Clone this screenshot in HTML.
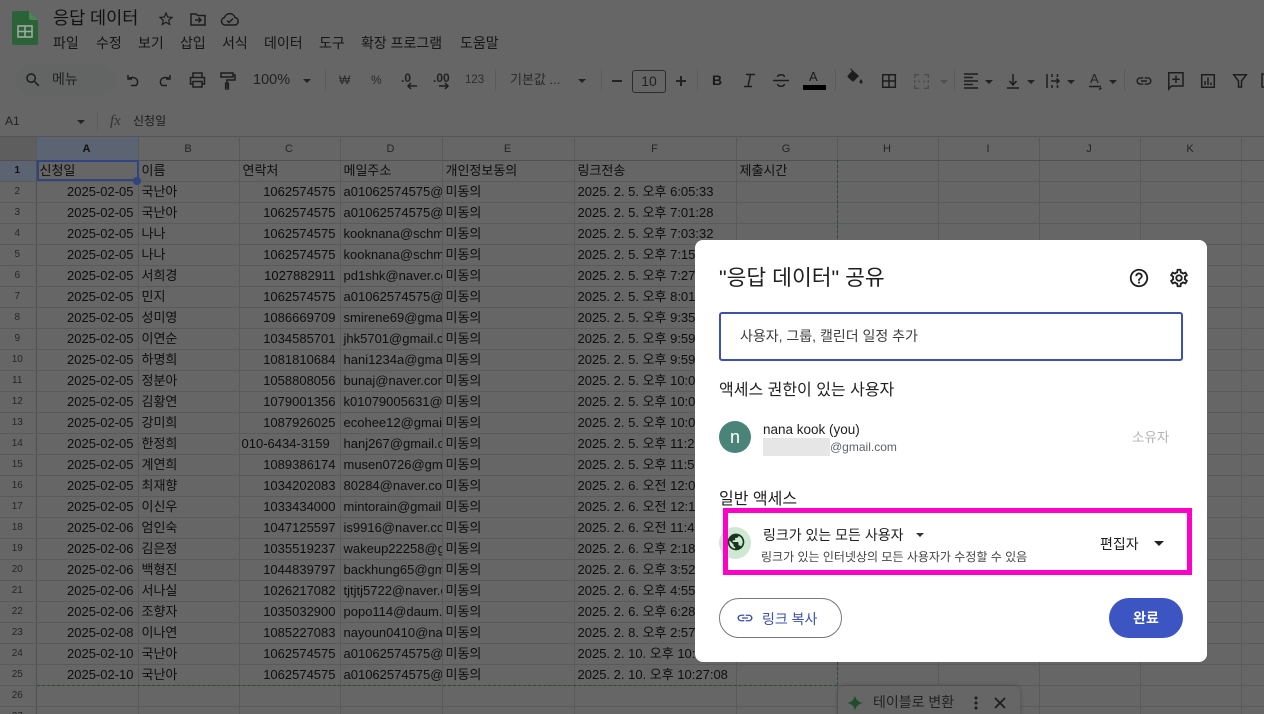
<!DOCTYPE html>
<html lang="ko"><head><meta charset="utf-8"><title>응답 데이터</title>
<style>
html,body{margin:0;padding:0;width:1264px;height:714px;overflow:hidden;background:#666}
body{position:relative;font-family:"Liberation Sans","Noto Sans CJK KR",sans-serif;color:#111}
#bg{position:absolute;left:0;top:0;width:1264px;height:714px;overflow:hidden;filter:blur(.35px)}
.a{position:absolute;white-space:nowrap}
.m{position:absolute;top:34px;font-size:14px;line-height:18px;color:#161616;white-space:nowrap}
svg{position:absolute;overflow:visible}
.t{fill:none;stroke:#1d1d1d;stroke-width:1.5}
.f{fill:#1d1d1d}
.c{position:absolute;width:0;height:0;border-left:4px solid transparent;border-right:4px solid transparent;border-top:4px solid #222}
.s{position:absolute;width:1px;height:22px;top:69px;background:#5a5a5a}
table{position:absolute;left:-1px;top:136px;border-collapse:collapse;table-layout:fixed;width:1342px}
td,th{padding:0 4px 0 3px;height:20px;line-height:20px;font-size:13px;font-weight:400;border-right:1px solid #5a5a5a;border-bottom:1px solid #5a5a5a;overflow:hidden;white-space:nowrap;color:#0e0e0e;box-sizing:border-box}
tr{height:21px}
tr.h{height:24px}
tr.h th{height:24px;font-size:11px;color:#242424;text-align:center;border-top:1px solid #555;border-bottom:1px solid #505050}
td.n{font-size:10px;text-align:center;color:#262626;padding:0;border-right:1px solid #505050}
td.r{text-align:right}
</style></head><body>
<div id="bg">
<!-- logo -->
<svg style="left:12px;top:11px" width="26" height="34" viewBox="0 0 26 34"><path d="M2 0H17L26 9V32a2 2 0 0 1-2 2H2a2 2 0 0 1-2-2V2A2 2 0 0 1 2 0Z" fill="#2b6238"/><path d="M17 0L26 9H19a2 2 0 0 1-2-2Z" fill="#4c8458"/><rect x="6" y="15" width="14" height="11" fill="none" stroke="#a0a8a2" stroke-width="1.6"/><path d="M6 20.500H20M13 15V26" stroke="#a0a8a2" stroke-width="1.6"/></svg>

<div class="a" style="left:53px;top:5px;font-size:17.500px;line-height:26px;color:#111">응답 데이터</div>
<svg style="left:157px;top:10px" width="18" height="18" viewBox="0 0 24 24"><path class="f" d="M22 9.240l-7.190-.62L12 2 9.190 8.630 2 9.240l5.460 4.730L5.820 21 12 17.270 18.180 21l-1.630-7.030L22 9.240zM12 15.400l-3.760 2.270 1-4.280-3.320-2.880 4.380-.38L12 6.100l1.710 4.040 4.380.38-3.320 2.880 1 4.280L12 15.400z"/></svg>
<svg style="left:189px;top:10px" width="18" height="18" viewBox="0 0 18 18"><path class="t" d="M2 15V4H7L8.500 5.500H16V15Z"/><path class="t" d="M6 10H12M9.500 7.500L12 10L9.500 12.500" stroke-width="1.3"/></svg>
<svg style="left:220px;top:10px" width="20" height="18" viewBox="0 0 20 18"><path class="t" d="M5 15A3.800 3.800 0 0 1 4.500 7.500A5.500 5.500 0 0 1 15 7.500A3.800 3.800 0 0 1 15 15Z"/><path class="t" d="M7 10.500L9 12.500L13 8.500" stroke-width="1.300"/></svg>

<div class="m" style="left:53px">파일</div>
<div class="m" style="left:96px">수정</div>
<div class="m" style="left:138px">보기</div>
<div class="m" style="left:180px">삽입</div>
<div class="m" style="left:222px">서식</div>
<div class="m" style="left:264px">데이터</div>
<div class="m" style="left:319px">도구</div>
<div class="m" style="left:361px">확장 프로그램</div>
<div class="m" style="left:460px">도움말</div>

<!-- toolbar -->
<div class="a" style="left:16px;top:64px;width:100px;height:32px;border-radius:16px;background:#636464"></div>
<svg style="left:24px;top:71px" width="18" height="18" viewBox="0 0 24 24"><path class="f" d="M15.500 14h-.79l-.28-.27C15.410 12.590 16 11.110 16 9.500 16 5.910 13.090 3 9.500 3S3 5.910 3 9.500 5.910 16 9.500 16c1.610 0 3.090-.59 4.230-1.570l.27.28v.79l5 4.990L20.490 19l-4.990-5zm-6 0C7.010 14 5 11.990 5 9.500S7.010 5 9.500 5 14 7.010 14 9.500 11.990 14 9.500 14z"/></svg>
<div class="a" style="left:52px;top:71px;font-size:14px;line-height:16px;color:#222">메뉴</div>
<svg style="left:125px;top:72px" width="16" height="16" viewBox="0 0 16 16"><path class="t" d="M3 3V7H7M3 7C5 5.500 8 5 10 6C13 7.500 13.500 11 11 13.500H6"/></svg>
<svg style="left:157px;top:72px" width="16" height="16" viewBox="0 0 16 16"><path class="t" d="M13 3V7H9M13 7C11 5.500 8 5 6 6C3 7.500 2.500 11 5 13.500H10"/></svg>
<svg style="left:189px;top:71px" width="17" height="18" viewBox="0 0 17 18"><path class="t" d="M4 6V2H13V6M4 13H1.500V6.500H15.500V13H13M4 10.500H13V16H4Z"/></svg>
<svg style="left:220px;top:71px" width="16" height="19" viewBox="0 0 16 19"><path class="t" d="M1 2H13V6H1ZM13 4H15V9H7V17"/><rect x="5.500" y="12" width="3" height="6" fill="none" stroke="#1d1d1d" stroke-width="1.200"/></svg>
<div class="a" style="left:253px;top:72px;font-size:14.500px;line-height:17px;color:#222">100%</div>
<div class="c" style="left:303px;top:79px"></div>
<div class="s" style="left:325px"></div>
<div class="a" style="left:339px;top:73px;font-size:12px;line-height:15px;color:#2a2a2a">₩</div>
<div class="a" style="left:371px;top:73px;font-size:12px;line-height:15px;color:#2a2a2a">%</div>
<div class="a" style="left:401px;top:71px;font-size:12px;line-height:14px;font-weight:700;color:#222">.0</div>
<svg style="left:406px;top:82px" width="12" height="8" viewBox="0 0 12 8"><path class="t" d="M11 4H2M5 1L2 4L5 7"/></svg>
<div class="a" style="left:433px;top:71px;font-size:12px;line-height:14px;font-weight:700;color:#222">.00</div>
<svg style="left:438px;top:82px" width="12" height="8" viewBox="0 0 12 8"><path class="t" d="M1 4H10M7 1L10 4L7 7"/></svg>
<div class="a" style="left:465px;top:73px;font-size:11.500px;line-height:15px;color:#2e2e2e">123</div>
<div class="s" style="left:495px"></div>
<div class="a" style="left:510px;top:71px;font-size:13px;line-height:18px;color:#2a2a2a">기본값 ...</div>
<div class="c" style="left:578px;top:79px"></div>
<div class="s" style="left:601px"></div>
<div class="a" style="left:612px;top:80px;width:10px;height:2px;background:#222"></div>
<div class="a" style="left:632px;top:70px;width:32px;height:21px;border:1px solid #2c2c2c;border-radius:3px;text-align:center;font-size:14px;line-height:21px;color:#222">10</div>
<div class="a" style="left:676px;top:80px;width:10px;height:2px;background:#222"></div>
<div class="a" style="left:680px;top:76px;width:2px;height:10px;background:#222"></div>
<div class="s" style="left:697px"></div>
<div class="a" style="left:712px;top:72px;font-size:14px;line-height:17px;font-weight:700;color:#1a1a1a">B</div>
<svg style="left:743px;top:73px" width="13" height="15" viewBox="0 0 13 15"><path class="t" d="M3 1.500H12M1 13.500H9M7.500 1.500L5 13.500" stroke-width="1.700"/></svg>
<svg style="left:773px;top:72px" width="16" height="17" viewBox="0 0 16 17"><path class="t" d="M0 8.500H16M4.500 5C5 2 11 2 11.500 5M4.500 12C5 15 11 15 11.500 12"/></svg>
<div class="a" style="left:809px;top:69px;font-size:13px;line-height:16px;color:#1a1a1a">A</div>
<div class="a" style="left:803px;top:85px;width:23px;height:5px;background:#000"></div>
<div class="s" style="left:835px"></div>
<svg style="left:847px;top:68px" width="16" height="18" viewBox="0 0 16 18"><path class="f" d="M3 1L5 3L0.800 7.500Q0 8.500 1 9.500L5 13Q6 14 7 13L12 8L6 2.500L4 0.500ZM14 11C13 12.500 12.500 13 12.500 14A1.500 1.500 0 0 0 15.500 14C15.500 13 15 12.500 14 11Z"/></svg>
<svg style="left:882px;top:74px" width="14" height="14" viewBox="0 0 14 14"><path class="t" d="M.7.700H13.300V13.300H.7ZM7 .7V13.300M.7 7H13.300"/></svg>
<svg style="left:914px;top:74px" width="15" height="15" viewBox="0 0 15 15"><path d="M.7 4V.7H5M10 .7H14.300V4M14.300 11V14.300H10M5 14.300H.7V11M.7 6V9M14.300 6V9M4 7.500H6M9 7.500H11" fill="none" stroke="#4c4c4c" stroke-width="1.400"/></svg>
<div class="c" style="left:940px;top:80px;border-top-color:#4e4e4e"></div>
<div class="s" style="left:954px"></div>
<svg style="left:964px;top:73px" width="14" height="16" viewBox="0 0 14 16"><path class="t" d="M0 1H14M0 4.500H9M0 8H14M0 11.500H9M0 15H14" stroke-width="1.300"/></svg>
<div class="c" style="left:985px;top:80px"></div>
<svg style="left:1006px;top:73px" width="14" height="16" viewBox="0 0 14 16"><path class="t" d="M1 15H13M7 1V11M3.500 8L7 12L10.500 8"/></svg>
<div class="c" style="left:1027px;top:80px"></div>
<svg style="left:1046px;top:73px" width="14" height="16" viewBox="0 0 14 16"><path class="t" d="M1 1V15M11.500 1V4M11.500 12V15M5 8H13M10.500 5.500L13 8L10.500 10.500M6 1V4M6 12V15"/></svg>
<div class="c" style="left:1067px;top:80px"></div>
<div class="a" style="left:1090px;top:71px;font-size:13px;line-height:15px;color:#222">A</div>
<svg style="left:1089px;top:85px" width="14" height="6" viewBox="0 0 14 6"><path class="t" d="M0 1.500H12M10 4.500L12.500 3" stroke-width="1.200"/></svg>
<div class="c" style="left:1109px;top:80px"></div>
<div class="s" style="left:1124px"></div>
<svg style="left:1135px;top:72px" width="18" height="18" viewBox="0 0 24 24"><path class="f" d="M3.900 12c0-1.710 1.390-3.100 3.100-3.100h4V7H7c-2.760 0-5 2.240-5 5s2.240 5 5 5h4v-1.900H7c-1.710 0-3.100-1.390-3.100-3.100zM8 13h8v-2H8v2zm9-6h-4v1.900h4c1.710 0 3.100 1.390 3.100 3.100s-1.390 3.100-3.100 3.100h-4V17h4c2.760 0 5-2.240 5-5s-2.240-5-5-5z"/></svg>
<svg style="left:1168px;top:72px" width="16" height="18" viewBox="0 0 16 18"><path class="t" d="M.8.800H15V14H3.500L.8 17ZM8 3.500V11M4.300 7.300H11.700"/></svg>
<svg style="left:1201px;top:74px" width="14" height="14" viewBox="0 0 14 14"><path class="t" d="M.7.700H13.300V13.300H.7ZM4 11V7M7 11V3.500M10 11V8.500"/></svg>
<svg style="left:1233px;top:74px" width="14" height="14" viewBox="0 0 14 14"><path class="t" d="M.7.800H13.300L8.500 7V13H5.500V7Z"/></svg>
<svg style="left:1261px;top:73px" width="8" height="16" viewBox="0 0 8 16"><path class="t" d="M1 1H9V14H1Z"/></svg>

<!-- formula bar -->
<div class="a" style="left:5px;top:113px;font-size:12px;line-height:16px;color:#222">A1</div>
<div class="c" style="left:77px;top:120px"></div>
<div class="a" style="left:97px;top:113px;width:1px;height:18px;background:#5a5a5a"></div>
<div class="a" style="left:110px;top:112px;font-family:'Liberation Serif',serif;font-style:italic;font-size:15px;line-height:18px;color:#333">fx</div>
<div class="a" style="left:133px;top:113px;font-size:12px;line-height:16px;color:#1c1c1c">신청일</div>

<table>
<colgroup><col style="width:37px"><col style="width:102px"><col style="width:101px"><col style="width:101px"><col style="width:102px"><col style="width:132px"><col style="width:162px"><col style="width:101px"><col style="width:101px"><col style="width:101px"><col style="width:101px"><col style="width:101px"><col style="width:100px"></colgroup>
<tr class="h"><th style="background:#5e5e5e"></th><th style="background:#5c6473;color:#111;font-weight:700">A</th><th>B</th><th>C</th><th>D</th><th>E</th><th>F</th><th>G</th><th>H</th><th>I</th><th>J</th><th>K</th><th></th></tr>
<tr><td class="n" style="background:#5c6473;color:#111;font-weight:700">1</td><td>신청일</td><td>이름</td><td>연락처</td><td>메일주소</td><td>개인정보동의</td><td>링크전송</td><td>제출시간</td><td></td><td></td><td></td><td></td><td></td></tr>
<tr><td class="n">2</td><td class="r">2025-02-05</td><td>국난아</td><td class="r">1062574575</td><td>a01062574575@gmail.com</td><td>미동의</td><td>2025. 2. 5. 오후 6:05:33</td><td></td><td></td><td></td><td></td><td></td><td></td></tr>
<tr><td class="n">3</td><td class="r">2025-02-05</td><td>국난아</td><td class="r">1062574575</td><td>a01062574575@gmail.com</td><td>미동의</td><td>2025. 2. 5. 오후 7:01:28</td><td></td><td></td><td></td><td></td><td></td><td></td></tr>
<tr><td class="n">4</td><td class="r">2025-02-05</td><td>나나</td><td class="r">1062574575</td><td>kooknana@schmail.com</td><td>미동의</td><td>2025. 2. 5. 오후 7:03:32</td><td></td><td></td><td></td><td></td><td></td><td></td></tr>
<tr><td class="n">5</td><td class="r">2025-02-05</td><td>나나</td><td class="r">1062574575</td><td>kooknana@schmail.com</td><td>미동의</td><td>2025. 2. 5. 오후 7:15:10</td><td></td><td></td><td></td><td></td><td></td><td></td></tr>
<tr><td class="n">6</td><td class="r">2025-02-05</td><td>서희경</td><td class="r">1027882911</td><td>pd1shk@naver.com</td><td>미동의</td><td>2025. 2. 5. 오후 7:27:10</td><td></td><td></td><td></td><td></td><td></td><td></td></tr>
<tr><td class="n">7</td><td class="r">2025-02-05</td><td>민지</td><td class="r">1062574575</td><td>a01062574575@gmail.com</td><td>미동의</td><td>2025. 2. 5. 오후 8:01:10</td><td></td><td></td><td></td><td></td><td></td><td></td></tr>
<tr><td class="n">8</td><td class="r">2025-02-05</td><td>성미영</td><td class="r">1086669709</td><td>smirene69@gmail.com</td><td>미동의</td><td>2025. 2. 5. 오후 9:35:10</td><td></td><td></td><td></td><td></td><td></td><td></td></tr>
<tr><td class="n">9</td><td class="r">2025-02-05</td><td>이연순</td><td class="r">1034585701</td><td>jhk5701@gmail.com</td><td>미동의</td><td>2025. 2. 5. 오후 9:59:10</td><td></td><td></td><td></td><td></td><td></td><td></td></tr>
<tr><td class="n">10</td><td class="r">2025-02-05</td><td>하명희</td><td class="r">1081810684</td><td>hani1234a@gmail.com</td><td>미동의</td><td>2025. 2. 5. 오후 9:59:10</td><td></td><td></td><td></td><td></td><td></td><td></td></tr>
<tr><td class="n">11</td><td class="r">2025-02-05</td><td>정분아</td><td class="r">1058808056</td><td>bunaj@naver.com</td><td>미동의</td><td>2025. 2. 5. 오후 10:01:10</td><td></td><td></td><td></td><td></td><td></td><td></td></tr>
<tr><td class="n">12</td><td class="r">2025-02-05</td><td>김황연</td><td class="r">1079001356</td><td>k01079005631@gmail.com</td><td>미동의</td><td>2025. 2. 5. 오후 10:01:10</td><td></td><td></td><td></td><td></td><td></td><td></td></tr>
<tr><td class="n">13</td><td class="r">2025-02-05</td><td>강미희</td><td class="r">1087926025</td><td>ecohee12@gmail.com</td><td>미동의</td><td>2025. 2. 5. 오후 10:01:10</td><td></td><td></td><td></td><td></td><td></td><td></td></tr>
<tr><td class="n">14</td><td class="r">2025-02-05</td><td>한정희</td><td style="padding-left:2px">010-6434-3159</td><td>hanj267@gmail.com</td><td>미동의</td><td>2025. 2. 5. 오후 11:20:10</td><td></td><td></td><td></td><td></td><td></td><td></td></tr>
<tr><td class="n">15</td><td class="r">2025-02-05</td><td>계연희</td><td class="r">1089386174</td><td>musen0726@gmail.com</td><td>미동의</td><td>2025. 2. 5. 오후 11:50:10</td><td></td><td></td><td></td><td></td><td></td><td></td></tr>
<tr><td class="n">16</td><td class="r">2025-02-05</td><td>최재향</td><td class="r">1034202083</td><td>80284@naver.com</td><td>미동의</td><td>2025. 2. 6. 오전 12:01:10</td><td></td><td></td><td></td><td></td><td></td><td></td></tr>
<tr><td class="n">17</td><td class="r">2025-02-05</td><td>이신우</td><td class="r">1033434000</td><td>mintorain@gmail.com</td><td>미동의</td><td>2025. 2. 6. 오전 12:10:10</td><td></td><td></td><td></td><td></td><td></td><td></td></tr>
<tr><td class="n">18</td><td class="r">2025-02-06</td><td>엄인숙</td><td class="r">1047125597</td><td>is9916@naver.com</td><td>미동의</td><td>2025. 2. 6. 오전 11:40:10</td><td></td><td></td><td></td><td></td><td></td><td></td></tr>
<tr><td class="n">19</td><td class="r">2025-02-06</td><td>김은정</td><td class="r">1035519237</td><td>wakeup22258@gmail.com</td><td>미동의</td><td>2025. 2. 6. 오후 2:18:10</td><td></td><td></td><td></td><td></td><td></td><td></td></tr>
<tr><td class="n">20</td><td class="r">2025-02-06</td><td>백형진</td><td class="r">1044839797</td><td>backhung65@gmail.com</td><td>미동의</td><td>2025. 2. 6. 오후 3:52:10</td><td></td><td></td><td></td><td></td><td></td><td></td></tr>
<tr><td class="n">21</td><td class="r">2025-02-06</td><td>서나실</td><td class="r">1026217082</td><td>tjtjtj5722@naver.com</td><td>미동의</td><td>2025. 2. 6. 오후 4:55:10</td><td></td><td></td><td></td><td></td><td></td><td></td></tr>
<tr><td class="n">22</td><td class="r">2025-02-06</td><td>조향자</td><td class="r">1035032900</td><td>popo114@daum.net</td><td>미동의</td><td>2025. 2. 6. 오후 6:28:10</td><td></td><td></td><td></td><td></td><td></td><td></td></tr>
<tr><td class="n">23</td><td class="r">2025-02-08</td><td>이나연</td><td class="r">1085227083</td><td>nayoun0410@naver.com</td><td>미동의</td><td>2025. 2. 8. 오후 2:57:10</td><td></td><td></td><td></td><td></td><td></td><td></td></tr>
<tr><td class="n">24</td><td class="r">2025-02-10</td><td>국난아</td><td class="r">1062574575</td><td>a01062574575@gmail.com</td><td>미동의</td><td>2025. 2. 10. 오후 10:20:10</td><td></td><td></td><td></td><td></td><td></td><td></td></tr>
<tr><td class="n">25</td><td class="r">2025-02-10</td><td>국난아</td><td class="r">1062574575</td><td>a01062574575@gmail.com</td><td>미동의</td><td>2025. 2. 10. 오후 10:27:08</td><td></td><td></td><td></td><td></td><td></td><td></td></tr>
<tr><td class="n">26</td><td></td><td></td><td></td><td></td><td></td><td></td><td></td><td></td><td></td><td></td><td></td><td></td></tr>
<tr><td class="n">27</td><td></td><td></td><td></td><td></td><td></td><td></td><td></td><td></td><td></td><td></td><td></td><td></td></tr>
</table>

<!-- selection -->
<div class="a" style="left:37px;top:160px;width:98px;height:17px;border:2px solid #30447f"></div>
<div class="a" style="left:133px;top:177px;width:8px;height:8px;border-radius:50%;background:#30447f"></div>
<!-- dashed range -->
<div class="a" style="left:37px;top:685px;width:800px;height:0;border-top:1px dashed #2f4a33"></div>
<div class="a" style="left:837px;top:160px;width:0;height:525px;border-left:1px dashed #2f4a33"></div>

<!-- toast -->
<div class="a" style="left:838px;top:686px;width:182px;height:40px;background:#666;border-radius:6px;box-shadow:0 0 4px rgba(0,0,0,.25)"></div>
<svg style="left:847px;top:695px" width="16" height="16" viewBox="0 0 16 16"><path d="M8 0Q9 7 16 8Q9 9 8 16Q7 9 0 8Q7 7 8 0Z" fill="#1f4d2b"/></svg>
<div class="a" style="left:873px;top:693px;font-size:14px;line-height:18px;color:#222">테이블로 변환</div>
<svg style="left:972px;top:695px" width="8" height="16" viewBox="0 0 8 16"><circle cx="4" cy="3" r="1.500" fill="#1a1a1a"/><circle cx="4" cy="8" r="1.500" fill="#1a1a1a"/><circle cx="4" cy="13" r="1.500" fill="#1a1a1a"/></svg>
<svg style="left:994px;top:697px" width="12" height="12" viewBox="0 0 12 12"><path d="M1 1L11 11M11 1L1 11" stroke="#1a1a1a" stroke-width="1.600" fill="none"/></svg>
</div>

<!-- dialog -->
<div class="a" style="left:695px;top:240px;width:512px;height:422px;background:#fff;border-radius:8px"></div>
<div class="a" style="left:719px;top:263px;font-size:21.500px;line-height:30px;color:#1f1f1f">"응답 데이터" 공유</div>
<svg style="left:1128px;top:267px" width="22" height="22" viewBox="0 0 24 24"><path fill="#1f1f1f" d="M11 18h2v-2h-2v2zm1-16C6.480 2 2 6.480 2 12s4.480 10 10 10 10-4.480 10-10S17.520 2 12 2zm0 18c-4.410 0-8-3.590-8-8s3.590-8 8-8 8 3.590 8 8-3.590 8-8 8zm0-14c-2.210 0-4 1.790-4 4h2c0-1.100.9-2 2-2s2 .9 2 2c0 2-3 1.750-3 5h2c0-2.250 3-2.500 3-5 0-2.210-1.790-4-4-4z"/></svg>
<svg style="left:1168px;top:267px" width="22" height="22" viewBox="0 0 24 24"><path fill="#1f1f1f" d="M19.430 12.980c.04-.32.07-.64.07-.98 0-.34-.03-.66-.07-.98l2.110-1.650c.19-.15.24-.42.12-.64l-2-3.460c-.09-.16-.26-.25-.44-.25-.06 0-.12.01-.17.03l-2.490 1c-.52-.4-1.080-.73-1.690-.98l-.38-2.650C14.460 2.180 14.250 2 14 2h-4c-.25 0-.46.18-.49.42l-.38 2.650c-.61.25-1.170.59-1.690.98l-2.490-1c-.06-.02-.12-.03-.18-.03-.17 0-.34.09-.43.25l-2 3.460c-.13.22-.07.49.12.64l2.110 1.650c-.04.32-.07.65-.07.98 0 .33.03.66.07.98l-2.110 1.650c-.19.15-.24.42-.12.64l2 3.460c.09.16.26.25.44.25.06 0 .12-.01.17-.03l2.490-1c.52.4 1.080.73 1.690.98l.38 2.650c.03.24.24.42.49.42h4c.25 0 .46-.18.49-.42l.38-2.650c.61-.25 1.170-.59 1.690-.98l2.490 1c.06.02.12.03.18.03.17 0 .34-.09.43-.25l2-3.460c.12-.22.07-.49-.12-.64l-2.110-1.650zm-1.980-1.710c.04.31.05.52.05.73 0 .21-.02.43-.05.73l-.14 1.130.89.7 1.080.84-.7 1.210-1.270-.51-1.040-.42-.9.68c-.43.32-.84.56-1.250.73l-1.060.43-.16 1.130-.2 1.350h-1.400l-.19-1.350-.16-1.130-1.060-.43c-.43-.18-.83-.41-1.230-.71l-.91-.7-1.060.43-1.270.51-.7-1.210 1.080-.84.89-.7-.14-1.130c-.03-.31-.05-.54-.05-.74s.02-.43.05-.73l.14-1.130-.89-.7-1.080-.84.7-1.210 1.270.51 1.040.42.9-.68c.43-.32.84-.56 1.250-.73l1.060-.43.16-1.130.2-1.350h1.390l.19 1.350.16 1.130 1.060.43c.43.18.83.41 1.230.71l.91.7 1.060-.43 1.270-.51.7 1.210-1.070.85-.89.7.14 1.130zM12 8c-2.210 0-4 1.790-4 4s1.790 4 4 4 4-1.790 4-4-1.790-4-4-4zm0 6c-1.100 0-2-.9-2-2s.9-2 2-2 2 .9 2 2-.9 2-2 2z"/></svg>

<div class="a" style="left:719px;top:312px;width:460px;height:45px;border:2px solid #3c51a8;border-radius:3px"></div>
<div class="a" style="left:740px;top:326px;font-size:14px;line-height:20px;color:#3c3c3c">사용자, 그룹, 캘린더 일정 추가</div>
<div class="a" style="left:719px;top:380px;font-size:16px;line-height:22px;color:#1f1f1f">액세스 권한이 있는 사용자</div>

<div class="a" style="left:719px;top:421px;width:32px;height:32px;border-radius:50%;background:#4a8478;color:#fff;font-size:18px;line-height:32px;text-align:center">n</div>
<div class="a" style="left:763px;top:421px;font-size:13.500px;line-height:18px;color:#1f1f1f">nana kook (you)</div>
<div class="a" style="left:763px;top:438px;width:67px;height:18px;background:#e6e6e6"></div>
<div class="a" style="left:830px;top:439px;font-size:12px;line-height:16px;color:#5f6368">@gmail.com</div>
<div class="a" style="left:1132px;top:429px;font-size:13.500px;line-height:18px;color:#b5b5b5">소유자</div>

<div class="a" style="left:719px;top:489px;font-size:16px;line-height:22px;color:#1f1f1f">일반 액세스</div>

<div class="a" style="left:719px;top:527px;width:32px;height:32px;border-radius:50%;background:#cfe8d2"></div>
<div class="a" style="left:723px;top:508px;width:459px;height:57px;border:5px solid #ff00c6"></div>
<svg style="left:726px;top:532px" width="20" height="20" viewBox="0 0 24 24"><path fill="#17361f" d="M12 2C6.480 2 2 6.480 2 12s4.480 10 10 10 10-4.480 10-10S17.520 2 12 2zm-1 17.930c-3.950-.49-7-3.850-7-7.930 0-.62.08-1.210.21-1.790L9 15v1c0 1.100.9 2 2 2v1.930zm6.900-2.540c-.26-.81-1-1.390-1.900-1.390h-1v-3c0-.55-.45-1-1-1H8v-2h2c.55 0 1-.45 1-1V7h2c1.100 0 2-.9 2-2v-.41c2.930 1.190 5 4.060 5 7.410 0 2.080-.8 3.970-2.100 5.390z"/></svg>
<div class="a" style="left:763px;top:525px;font-size:14px;line-height:20px;color:#1f1f1f">링크가 있는 모든 사용자</div>
<div class="c" style="left:916px;top:533px;border-top-color:#333"></div>
<div class="a" style="left:761px;top:549px;font-size:12px;line-height:17px;color:#444">링크가 있는 인터넷상의 모든 사용자가 수정할 수 있음</div>
<div class="a" style="left:1100px;top:534px;font-size:14px;line-height:20px;color:#1f1f1f">편집자</div>
<div class="a" style="left:1154px;top:541px;width:0;height:0;border-left:5px solid transparent;border-right:5px solid transparent;border-top:5px solid #222"></div>

<div class="a" style="left:719px;top:598px;width:121px;height:38px;border:1px solid #777;border-radius:20px"></div>
<svg style="left:736px;top:610px" width="18" height="16" viewBox="0 0 24 24" preserveAspectRatio="none"><path fill="#3c51a8" d="M3.900 12c0-1.710 1.390-3.100 3.100-3.100h4V7H7c-2.760 0-5 2.240-5 5s2.240 5 5 5h4v-1.900H7c-1.710 0-3.100-1.390-3.100-3.100zM8 13h8v-2H8v2zm9-6h-4v1.900h4c1.710 0 3.100 1.390 3.100 3.100s-1.390 3.100-3.100 3.100h-4V17h4c2.760 0 5-2.240 5-5s-2.240-5-5-5z"/></svg>
<div class="a" style="left:762px;top:609px;font-size:14px;line-height:20px;color:#3c51a8">링크 복사</div>
<div class="a" style="left:1109px;top:598px;width:74px;height:40px;border-radius:20px;background:#3c55c2;color:#fff;font-size:14px;font-weight:700;line-height:40px;text-align:center">완료</div>

</body></html>
